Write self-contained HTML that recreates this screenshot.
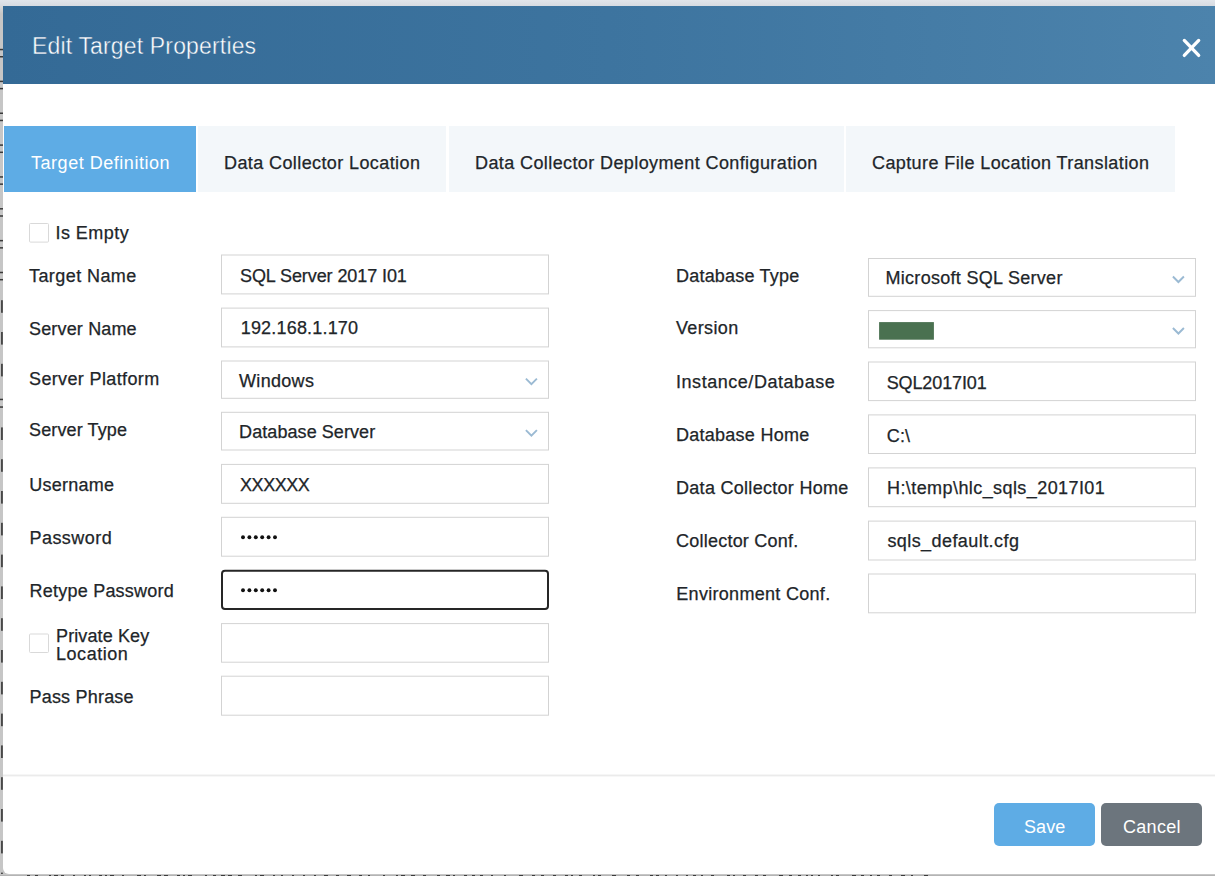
<!DOCTYPE html>
<html>
<head>
<meta charset="utf-8">
<title>Edit Target Properties</title>
<style>
  html, body { margin: 0; padding: 0; }
  body {
    width: 1215px; height: 876px; overflow: hidden; position: relative;
    background: #ffffff;
    font-family: "Liberation Sans", sans-serif;
    color: #212529;
  }
  .abs { position: absolute; }
  #topstrip { left: 0; top: 0; width: 1215px; height: 6px; background: linear-gradient(#e1e5ea, #d7dbe1); }
  #leftstrip { left: 0; top: 0; width: 3px; height: 876px; background: linear-gradient(180deg, #dcdcdc 5px, #c6c6c6 14px), #c6c6c6; }
  #botstrip { left: 0; top: 874px; width: 1215px; height: 2px; background: linear-gradient(#cfcfcf, #ababab); }
  #dialog { left: 3px; top: 6px; width: 1212px; height: 868px; background: #fff; border-bottom-left-radius: 6px; }
  #header {
    left: 3px; top: 6px; width: 1212px; height: 78px;
    background: linear-gradient(90deg, #346a96 0%, #3d749f 50%, #4c83ac 100%);
  }
  #title { left: 32px; top: 30px; font-size: 23px; line-height: 32px; color: #fff; white-space: nowrap; letter-spacing: 0.16px; -webkit-text-stroke: 0.4px #356b97; }
  .tab {
    top: 126px; height: 66px; background: #f3f7fa; font-size: 18px; line-height: 20px;
    white-space: nowrap; color: #212529;
  }
  .tab span { position: absolute; top: 27px; }
  .tab span { -webkit-text-stroke: 0.25px #212529; }
  .tab.active { background: #5eace5; color: #fff; }
  .tab.active span { -webkit-text-stroke: 0; }
  .t { position: absolute; font-size: 18px; line-height: 20px; white-space: nowrap; color: #212529; -webkit-text-stroke: 0.25px #212529; }
  #shapes { left: 0; top: 0; }
  #sep { left: 3px; top: 774px; width: 1212px; height: 3px; background: linear-gradient(#f6f6f6 0, #f6f6f6 1px, #ebebeb 1px, #ebebeb 2px, #f7f7f7 2px, #f7f7f7 3px); }
  .btn { top: 803px; height: 43px; width: 101px; border-radius: 5px; color: #fff; font-size: 18px; line-height: 20px; white-space: nowrap; }
  .btn span { position: absolute; top: 14px; }
</style>
</head>
<body>
<div class="abs" style="left:0;top:860px;width:12px;height:16px;background:#c3c3c3"></div>
<div class="abs" id="dialog"></div>
<div class="abs" id="leftstrip"></div>
<div class="abs" id="topstrip"></div>
<div class="abs" id="botstrip"></div>
<div class="abs" id="header"></div>
<div class="abs" id="title">Edit Target Properties</div>
<div class="abs tab active" style="left:4px;width:192px"><span style="left:27px;letter-spacing:0.53px">Target Definition</span></div>
<div class="abs tab" style="left:198px;width:248px"><span style="left:26px;letter-spacing:0.4px">Data Collector Location</span></div>
<div class="abs tab" style="left:449px;width:395px"><span style="left:26px;letter-spacing:0.4px">Data Collector Deployment Configuration</span></div>
<div class="abs tab" style="left:846px;width:329px"><span style="left:26px;letter-spacing:0.4px">Capture File Location Translation</span></div>
<svg class="abs" id="shapes" width="1215" height="876" viewBox="0 0 1215 876">
<rect x="0" y="48.8" width="3" height="1.5" fill="#3a3a3a"/>
<rect x="0" y="56" width="3" height="1.5" fill="#3a3a3a"/>
<rect x="0" y="80.65" width="3" height="1.5" fill="#3a3a3a"/>
<rect x="0" y="87.85" width="3" height="1.5" fill="#3a3a3a"/>
<rect x="0" y="112.5" width="3" height="1.5" fill="#3a3a3a"/>
<rect x="0" y="119.7" width="3" height="1.5" fill="#3a3a3a"/>
<rect x="0" y="144.35" width="3" height="1.5" fill="#3a3a3a"/>
<rect x="0" y="151.55" width="3" height="1.5" fill="#3a3a3a"/>
<rect x="0" y="176.2" width="3" height="1.5" fill="#3a3a3a"/>
<rect x="0" y="183.4" width="3" height="1.5" fill="#3a3a3a"/>
<rect x="0" y="208.05" width="3" height="1.5" fill="#3a3a3a"/>
<rect x="0" y="215.25" width="3" height="1.5" fill="#3a3a3a"/>
<rect x="0" y="239.9" width="3" height="1.5" fill="#3a3a3a"/>
<rect x="0" y="247.1" width="3" height="1.5" fill="#3a3a3a"/>
<rect x="0" y="271.75" width="3" height="1.5" fill="#3a3a3a"/>
<rect x="0" y="278.95" width="3" height="1.5" fill="#3a3a3a"/>
<rect x="1.2" y="300.2" width="1.5" height="12.6" fill="#2a2a2a"/>
<rect x="1.2" y="332" width="1.5" height="12.6" fill="#2a2a2a"/>
<rect x="1.2" y="363.8" width="1.5" height="12.6" fill="#2a2a2a"/>
<rect x="0" y="398.7" width="3" height="1.5" fill="#3a3a3a"/>
<rect x="0" y="406.3" width="3" height="1.5" fill="#3a3a3a"/>
<rect x="1.2" y="427.4" width="1.5" height="12.6" fill="#2a2a2a"/>
<rect x="1.2" y="459.2" width="1.5" height="12.6" fill="#2a2a2a"/>
<rect x="1.2" y="491" width="1.5" height="12.6" fill="#2a2a2a"/>
<rect x="1.2" y="522.8" width="1.5" height="12.6" fill="#2a2a2a"/>
<rect x="1.2" y="554.6" width="1.5" height="12.6" fill="#2a2a2a"/>
<rect x="1.2" y="586.4" width="1.5" height="12.6" fill="#2a2a2a"/>
<rect x="1.2" y="618.2" width="1.5" height="12.6" fill="#2a2a2a"/>
<rect x="1.2" y="650" width="1.5" height="12.6" fill="#2a2a2a"/>
<rect x="1.2" y="681.8" width="1.5" height="12.6" fill="#2a2a2a"/>
<rect x="1.2" y="713.6" width="1.5" height="12.6" fill="#2a2a2a"/>
<rect x="1.2" y="745.4" width="1.5" height="12.6" fill="#2a2a2a"/>
<rect x="1.2" y="777.2" width="1.5" height="12.6" fill="#2a2a2a"/>
<rect x="1.2" y="809" width="1.5" height="12.6" fill="#2a2a2a"/>
<rect x="1.2" y="840.8" width="1.5" height="12.6" fill="#2a2a2a"/>
<rect x="1.2" y="872.6" width="1.5" height="1.4" fill="#2a2a2a"/>
<rect x="27" y="875" width="3" height="1" fill="#3c3c3c"/>
<rect x="35" y="875" width="3" height="1" fill="#3c3c3c"/>
<rect x="49" y="875" width="2" height="1" fill="#3c3c3c"/>
<rect x="54" y="875" width="4" height="1" fill="#3c3c3c"/>
<rect x="61" y="875" width="3" height="1" fill="#3c3c3c"/>
<rect x="73" y="875" width="2" height="1" fill="#3c3c3c"/>
<rect x="84" y="875" width="2" height="1" fill="#3c3c3c"/>
<rect x="89" y="875" width="2" height="1" fill="#3c3c3c"/>
<rect x="99" y="875" width="3" height="1" fill="#3c3c3c"/>
<rect x="105" y="875" width="2" height="1" fill="#3c3c3c"/>
<rect x="110" y="875" width="4" height="1" fill="#3c3c3c"/>
<rect x="122" y="875" width="2" height="1" fill="#3c3c3c"/>
<rect x="137" y="875" width="4" height="1" fill="#3c3c3c"/>
<rect x="144" y="875" width="2" height="1" fill="#3c3c3c"/>
<rect x="157" y="875" width="4" height="1" fill="#3c3c3c"/>
<rect x="164" y="875" width="4" height="1" fill="#3c3c3c"/>
<rect x="177" y="875" width="3" height="1" fill="#3c3c3c"/>
<rect x="183" y="875" width="2" height="1" fill="#3c3c3c"/>
<rect x="188" y="875" width="4" height="1" fill="#3c3c3c"/>
<rect x="205" y="875" width="2" height="1" fill="#3c3c3c"/>
<rect x="213" y="875" width="3" height="1" fill="#3c3c3c"/>
<rect x="221" y="875" width="4" height="1" fill="#3c3c3c"/>
<rect x="228" y="875" width="4" height="1" fill="#3c3c3c"/>
<rect x="238" y="875" width="4" height="1" fill="#3c3c3c"/>
<rect x="255" y="875" width="2" height="1" fill="#3c3c3c"/>
<rect x="260" y="875" width="4" height="1" fill="#3c3c3c"/>
<rect x="273" y="875" width="2" height="1" fill="#3c3c3c"/>
<rect x="281" y="875" width="2" height="1" fill="#3c3c3c"/>
<rect x="292" y="875" width="2" height="1" fill="#3c3c3c"/>
<rect x="303" y="875" width="2" height="1" fill="#3c3c3c"/>
<rect x="314" y="875" width="2" height="1" fill="#3c3c3c"/>
<rect x="324" y="875" width="4" height="1" fill="#3c3c3c"/>
<rect x="336" y="875" width="3" height="1" fill="#3c3c3c"/>
<rect x="347" y="875" width="4" height="1" fill="#3c3c3c"/>
<rect x="359" y="875" width="3" height="1" fill="#3c3c3c"/>
<rect x="368" y="875" width="2" height="1" fill="#3c3c3c"/>
<rect x="383" y="875" width="2" height="1" fill="#3c3c3c"/>
<rect x="396" y="875" width="2" height="1" fill="#3c3c3c"/>
<rect x="401" y="875" width="4" height="1" fill="#3c3c3c"/>
<rect x="411" y="875" width="4" height="1" fill="#3c3c3c"/>
<rect x="423" y="875" width="3" height="1" fill="#3c3c3c"/>
<rect x="437" y="875" width="3" height="1" fill="#3c3c3c"/>
<rect x="446" y="875" width="4" height="1" fill="#3c3c3c"/>
<rect x="453" y="875" width="2" height="1" fill="#3c3c3c"/>
<rect x="464" y="875" width="3" height="1" fill="#3c3c3c"/>
<rect x="472" y="875" width="3" height="1" fill="#3c3c3c"/>
<rect x="480" y="875" width="3" height="1" fill="#3c3c3c"/>
<rect x="491" y="875" width="2" height="1" fill="#3c3c3c"/>
<rect x="504" y="875" width="2" height="1" fill="#3c3c3c"/>
<rect x="519" y="875" width="4" height="1" fill="#3c3c3c"/>
<rect x="532" y="875" width="3" height="1" fill="#3c3c3c"/>
<rect x="541" y="875" width="3" height="1" fill="#3c3c3c"/>
<rect x="553" y="875" width="3" height="1" fill="#3c3c3c"/>
<rect x="565" y="875" width="3" height="1" fill="#3c3c3c"/>
<rect x="571" y="875" width="2" height="1" fill="#3c3c3c"/>
<rect x="579" y="875" width="3" height="1" fill="#3c3c3c"/>
<rect x="593" y="875" width="2" height="1" fill="#3c3c3c"/>
<rect x="598" y="875" width="3" height="1" fill="#3c3c3c"/>
<rect x="612" y="875" width="4" height="1" fill="#3c3c3c"/>
<rect x="627" y="875" width="3" height="1" fill="#3c3c3c"/>
<rect x="636" y="875" width="3" height="1" fill="#3c3c3c"/>
<rect x="650" y="875" width="3" height="1" fill="#3c3c3c"/>
<rect x="656" y="875" width="3" height="1" fill="#3c3c3c"/>
<rect x="665" y="875" width="2" height="1" fill="#3c3c3c"/>
<rect x="676" y="875" width="2" height="1" fill="#3c3c3c"/>
<rect x="686" y="875" width="2" height="1" fill="#3c3c3c"/>
<rect x="693" y="875" width="3" height="1" fill="#3c3c3c"/>
<rect x="701" y="875" width="2" height="1" fill="#3c3c3c"/>
<rect x="711" y="875" width="3" height="1" fill="#3c3c3c"/>
<rect x="727" y="875" width="3" height="1" fill="#3c3c3c"/>
<rect x="733" y="875" width="2" height="1" fill="#3c3c3c"/>
<rect x="743" y="875" width="3" height="1" fill="#3c3c3c"/>
<rect x="755" y="875" width="3" height="1" fill="#3c3c3c"/>
<rect x="763" y="875" width="3" height="1" fill="#3c3c3c"/>
<rect x="779" y="875" width="4" height="1" fill="#3c3c3c"/>
<rect x="789" y="875" width="3" height="1" fill="#3c3c3c"/>
<rect x="798" y="875" width="3" height="1" fill="#3c3c3c"/>
<rect x="806" y="875" width="2" height="1" fill="#3c3c3c"/>
<rect x="811" y="875" width="2" height="1" fill="#3c3c3c"/>
<rect x="818" y="875" width="2" height="1" fill="#3c3c3c"/>
<rect x="831" y="875" width="2" height="1" fill="#3c3c3c"/>
<rect x="836" y="875" width="3" height="1" fill="#3c3c3c"/>
<rect x="852" y="875" width="4" height="1" fill="#3c3c3c"/>
<rect x="861" y="875" width="3" height="1" fill="#3c3c3c"/>
<rect x="870" y="875" width="2" height="1" fill="#3c3c3c"/>
<rect x="877" y="875" width="3" height="1" fill="#3c3c3c"/>
<rect x="889" y="875" width="3" height="1" fill="#3c3c3c"/>
<rect x="901" y="875" width="4" height="1" fill="#3c3c3c"/>
<rect x="911" y="875" width="2" height="1" fill="#3c3c3c"/>
<rect x="924" y="875" width="4" height="1" fill="#3c3c3c"/>
<path d="M1184.3 40.4 L1198.7 55.4 M1198.7 40.4 L1184.3 55.4" stroke="#fff" stroke-width="3.3" stroke-linecap="round" fill="none"/>
<rect x="29.5" y="223.5" width="19" height="18.6" rx="1" fill="#fff" stroke="#d9d9d9" stroke-width="1"/>
<rect x="29.5" y="634" width="19" height="18.5" rx="1" fill="#fff" stroke="#d9d9d9" stroke-width="1"/>
<rect x="221.5" y="255" width="327" height="38.9" fill="#fff" stroke="#d3d3d3" stroke-width="1"/>
<rect x="221.5" y="308.1" width="327" height="38.8" fill="#fff" stroke="#d3d3d3" stroke-width="1"/>
<rect x="221.5" y="361" width="327" height="37.3" fill="#fff" stroke="#d3d3d3" stroke-width="1"/>
<path d="M525.9 378.64 L531.4 384.14 L536.9 378.64" fill="none" stroke="#9bbad3" stroke-width="1.9" stroke-linejoin="miter"/>
<rect x="221.5" y="412.3" width="327" height="37.7" fill="#fff" stroke="#d3d3d3" stroke-width="1"/>
<path d="M525.9 430.14 L531.4 435.64 L536.9 430.14" fill="none" stroke="#9bbad3" stroke-width="1.9" stroke-linejoin="miter"/>
<rect x="221.5" y="464.4" width="327" height="38.9" fill="#fff" stroke="#d3d3d3" stroke-width="1"/>
<rect x="221.5" y="517.3" width="327" height="38.9" fill="#fff" stroke="#d3d3d3" stroke-width="1"/>
<circle cx="243" cy="537.2" r="1.95" fill="#111"/>
<circle cx="249.4" cy="537.2" r="1.95" fill="#111"/>
<circle cx="255.8" cy="537.2" r="1.95" fill="#111"/>
<circle cx="262.2" cy="537.2" r="1.95" fill="#111"/>
<circle cx="268.6" cy="537.2" r="1.95" fill="#111"/>
<circle cx="275" cy="537.2" r="1.95" fill="#111"/>
<rect x="222" y="570.7" width="326" height="38.2" rx="3" fill="#fff" stroke="#262626" stroke-width="2"/>
<circle cx="243" cy="590.2" r="1.95" fill="#111"/>
<circle cx="249.4" cy="590.2" r="1.95" fill="#111"/>
<circle cx="255.8" cy="590.2" r="1.95" fill="#111"/>
<circle cx="262.2" cy="590.2" r="1.95" fill="#111"/>
<circle cx="268.6" cy="590.2" r="1.95" fill="#111"/>
<circle cx="275" cy="590.2" r="1.95" fill="#111"/>
<rect x="221.5" y="623.6" width="327" height="38.6" fill="#fff" stroke="#d3d3d3" stroke-width="1"/>
<rect x="221.5" y="676.2" width="327" height="39" fill="#fff" stroke="#d3d3d3" stroke-width="1"/>
<rect x="868.5" y="258.5" width="327" height="37.8" fill="#fff" stroke="#d3d3d3" stroke-width="1"/>
<path d="M1172.9 276.54 L1178.4 282.04 L1183.9 276.54" fill="none" stroke="#9bbad3" stroke-width="1.9" stroke-linejoin="miter"/>
<rect x="868.5" y="310.6" width="327" height="37.2" fill="#fff" stroke="#d3d3d3" stroke-width="1"/>
<path d="M1172.9 328.04 L1178.4 333.54 L1183.9 328.04" fill="none" stroke="#9bbad3" stroke-width="1.9" stroke-linejoin="miter"/>
<rect x="879.1" y="322.1" width="54.8" height="17.6" fill="#4a7150"/>
<rect x="868.5" y="362" width="327" height="38.6" fill="#fff" stroke="#d3d3d3" stroke-width="1"/>
<rect x="868.5" y="414.9" width="327" height="38.6" fill="#fff" stroke="#d3d3d3" stroke-width="1"/>
<rect x="868.5" y="467.9" width="327" height="38.8" fill="#fff" stroke="#d3d3d3" stroke-width="1"/>
<rect x="868.5" y="521.1" width="327" height="38.9" fill="#fff" stroke="#d3d3d3" stroke-width="1"/>
<rect x="868.5" y="574" width="327" height="38.8" fill="#fff" stroke="#d3d3d3" stroke-width="1"/>
</svg>
<div class="t" style="left:55.5px;top:223px;letter-spacing:0.45px;">Is Empty</div>
<div class="t" style="left:29px;top:266px;letter-spacing:0.42px;">Target Name</div>
<div class="t" style="left:29px;top:319px;letter-spacing:0.16px;">Server Name</div>
<div class="t" style="left:29px;top:369px;letter-spacing:0.37px;">Server Platform</div>
<div class="t" style="left:29px;top:420px;letter-spacing:0.13px;">Server Type</div>
<div class="t" style="left:29.3px;top:475px;letter-spacing:0.23px;">Username</div>
<div class="t" style="left:29.5px;top:528px;letter-spacing:0.45px;">Password</div>
<div class="t" style="left:29.5px;top:581px;letter-spacing:0.23px;">Retype Password</div>
<div class="t" style="left:56px;top:627px;letter-spacing:0.12px;line-height:19px">Private Key</div>
<div class="t" style="left:56px;top:645px;letter-spacing:0.54px;line-height:19px">Location</div>
<div class="t" style="left:29.5px;top:687px;letter-spacing:0.2px;">Pass Phrase</div>
<div class="t" style="left:240px;top:266px;letter-spacing:-0.09px;">SQL Server 2017 I01</div>
<div class="t" style="left:240.7px;top:318px;letter-spacing:0.19px;">192.168.1.170</div>
<div class="t" style="left:239px;top:371px;letter-spacing:0.32px;">Windows</div>
<div class="t" style="left:239.1px;top:422px;letter-spacing:0.07px;">Database Server</div>
<div class="t" style="left:240px;top:475px;letter-spacing:-0.44px;">XXXXXX</div>
<div class="t" style="left:676px;top:266px;letter-spacing:0.21px;">Database Type</div>
<div class="t" style="left:676px;top:318px;letter-spacing:0.35px;">Version</div>
<div class="t" style="left:676px;top:372px;letter-spacing:0.54px;">Instance/Database</div>
<div class="t" style="left:676px;top:425px;letter-spacing:0.26px;">Database Home</div>
<div class="t" style="left:676px;top:478px;letter-spacing:0.29px;">Data Collector Home</div>
<div class="t" style="left:676px;top:531px;letter-spacing:0.23px;">Collector Conf.</div>
<div class="t" style="left:676.3px;top:584px;letter-spacing:0.3px;">Environment Conf.</div>
<div class="t" style="left:885.5px;top:268px;letter-spacing:0.29px;">Microsoft SQL Server</div>
<div class="t" style="left:886.7px;top:373px;letter-spacing:-0.12px;">SQL2017I01</div>
<div class="t" style="left:886.7px;top:426px;letter-spacing:0.2px;">C:\</div>
<div class="t" style="left:887px;top:478px;letter-spacing:0.42px;">H:\temp\hlc_sqls_2017I01</div>
<div class="t" style="left:887.4px;top:531px;letter-spacing:0.43px;">sqls_default.cfg</div>
<div class="abs" id="sep"></div>
<div class="abs btn" style="left:994px;background:#5eace5"><span style="left:30px;letter-spacing:0.1px">Save</span></div>
<div class="abs btn" style="left:1101px;background:#6c757d"><span style="left:22px;letter-spacing:0.3px">Cancel</span></div>
</body>
</html>
